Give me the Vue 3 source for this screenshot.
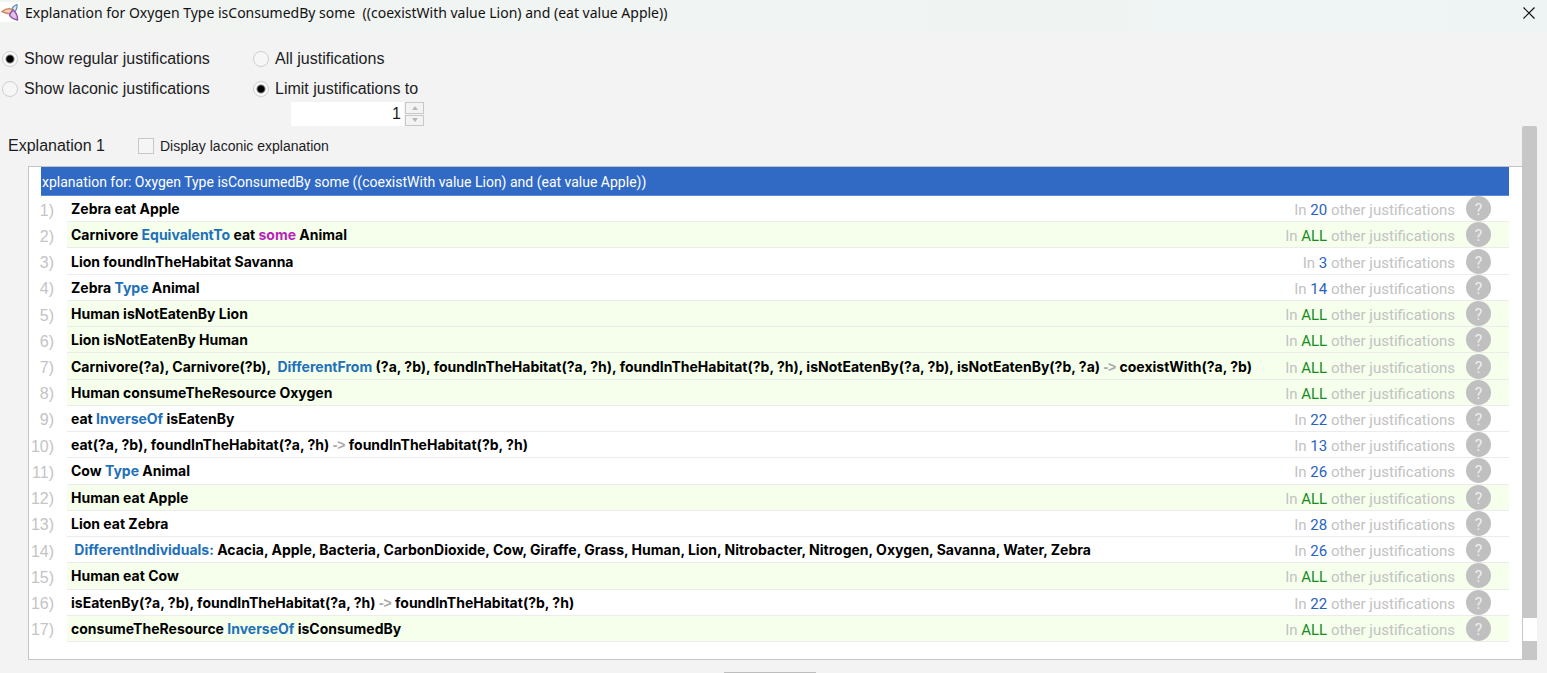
<script setup>
import { ref } from 'vue'

const mode = ref('regular')
const scope = ref('limit')
const limit = ref(1)
const laconic = ref(false)

// Token kinds: k = keyword, s = restriction, a = arrow
const axioms = [
  { count: '20', parts: [['Zebra eat Apple']] },
  { count: 'ALL', parts: [['Carnivore '], ['EquivalentTo', 'k'], [' eat '], ['some', 's'], [' Animal']] },
  { count: '3', parts: [['Lion foundInTheHabitat Savanna']] },
  { count: '14', parts: [['Zebra '], ['Type', 'k'], [' Animal']] },
  { count: 'ALL', parts: [['Human isNotEatenBy Lion']] },
  { count: 'ALL', parts: [['Lion isNotEatenBy Human']] },
  {
    count: 'ALL',
    parts: [
      ['Carnivore(?a), Carnivore(?b),  '],
      ['DifferentFrom', 'k'],
      [' (?a, ?b), foundInTheHabitat(?a, ?h), foundInTheHabitat(?b, ?h), isNotEatenBy(?a, ?b), isNotEatenBy(?b, ?a) '],
      ['->', 'a'],
      [' coexistWith(?a, ?b)'],
    ],
  },
  { count: 'ALL', parts: [['Human consumeTheResource Oxygen']] },
  { count: '22', parts: [['eat '], ['InverseOf', 'k'], [' isEatenBy']] },
  { count: '13', parts: [['eat(?a, ?b), foundInTheHabitat(?a, ?h) '], ['->', 'a'], [' foundInTheHabitat(?b, ?h)']] },
  { count: '26', parts: [['Cow '], ['Type', 'k'], [' Animal']] },
  { count: 'ALL', parts: [['Human eat Apple']] },
  { count: '28', parts: [['Lion eat Zebra']] },
  {
    count: '26',
    parts: [
      [' '],
      ['DifferentIndividuals:', 'k'],
      [' Acacia, Apple, Bacteria, CarbonDioxide, Cow, Giraffe, Grass, Human, Lion, Nitrobacter, Nitrogen, Oxygen, Savanna, Water, Zebra'],
    ],
  },
  { count: 'ALL', parts: [['Human eat Cow']] },
  { count: '22', parts: [['isEatenBy(?a, ?b), foundInTheHabitat(?a, ?h) '], ['->', 'a'], [' foundInTheHabitat(?b, ?h)']] },
  { count: 'ALL', parts: [['consumeTheResource '], ['InverseOf', 'k'], [' isConsumedBy']] },
]
</script>

<template>
  <div class="window">
    <header class="titlebar">
      <svg class="logo" viewBox="0 0 20 22" aria-hidden="true">
        <rect width="20" height="20" y="2" fill="#fff" />
        <path d="M12 9Q13 6 17 4.500Q17.500 9 14.500 12" fill="#dcebf2" stroke="#5a90b4" stroke-width="1.200" />
        <path d="M2 11.500Q7 7.500 13 9.500Q11 14 8 13.500Q5 13 2 11.500Z" fill="#f0d2bd" stroke="#cf8a60" stroke-width="1.500" />
        <path d="M13 10Q18 14 17.500 20Q11 18.500 9.500 15Q11 12 13 10Z" fill="#dfc3ea" stroke="#9350ac" stroke-width="1.500" />
      </svg>
      <h1>Explanation for Oxygen Type isConsumedBy some&nbsp; ((coexistWith value Lion) and (eat value Apple))</h1>
      <button class="close" type="button" aria-label="Close">
        <svg viewBox="0 0 12 12"><path d="M0.500 0.500L11.500 11.500M11.500 0.500L0.500 11.500" stroke="#111" stroke-width="1.200" /></svg>
      </button>
    </header>

    <form class="options" @submit.prevent>
      <div class="group">
        <label><input v-model="mode" type="radio" name="mode" value="regular" />Show regular justifications</label>
        <label><input v-model="mode" type="radio" name="mode" value="laconic" />Show laconic justifications</label>
      </div>
      <div class="group">
        <label><input v-model="scope" type="radio" name="scope" value="all" />All justifications</label>
        <label><input v-model="scope" type="radio" name="scope" value="limit" />Limit justifications to</label>
        <div class="spinner">
          <input v-model="limit" type="text" inputmode="numeric" aria-label="Justification limit" />
          <div class="steps">
            <button type="button" aria-label="Increase" @click="limit++">
              <svg viewBox="0 0 6 4"><path d="M0 4L3 0L6 4Z" fill="#b8b8b8" /></svg>
            </button>
            <button type="button" aria-label="Decrease" @click="limit--">
              <svg viewBox="0 0 6 4"><path d="M0 0L3 4L6 0Z" fill="#b8b8b8" /></svg>
            </button>
          </div>
        </div>
      </div>
    </form>

    <main class="scroller">
      <section class="explanation">
        <div class="heading">
          <h2>Explanation 1</h2>
          <label><input v-model="laconic" type="checkbox" />Display laconic explanation</label>
        </div>
        <div class="panel">
          <h3>xplanation for: Oxygen Type isConsumedBy some ((coexistWith value Lion) and (eat value Apple))</h3>
          <ol>
            <li v-for="(axiom, i) in axioms" :key="i">
              <span class="number">{{ i + 1 }})</span>
              <div class="row" :class="{ shared: axiom.count === 'ALL' }">
                <span class="axiom"><span v-for="(part, j) in axiom.parts" :key="j" :class="part[1]">{{ part[0] }}</span></span>
                <span class="usage">In <b>{{ axiom.count }}</b> other justifications</span>
                <button class="help" type="button" aria-label="Explain axiom">?</button>
              </div>
            </li>
          </ol>
        </div>
      </section>
      <div class="track"><div class="thumb"></div></div>
    </main>

    <footer><button type="button" aria-label="OK"></button></footer>
  </div>
</template>

<style>
body {
  margin: 0;
  background: #f3f3f3;
}
</style>

<style scoped>
* {
  box-sizing: border-box;
}
.window {
  display: flex;
  flex-direction: column;
  min-height: 100vh;
  background: #f3f3f3;
  color: #1c1c24;
  font: 16px/20px "Liberation Sans", Arial, sans-serif;
}
h1,
h2,
h3,
ol {
  margin: 0;
  padding: 0;
  font-weight: normal;
}
h2 {
  font-size: 16px;
}
button {
  margin: 0;
  padding: 0;
  font: inherit;
}
.titlebar {
  display: flex;
  align-items: flex-start;
  height: 32px;
  background: linear-gradient(90deg, #f1f4f1, #eef4f4);
}
.logo {
  width: 20px;
  height: 22px;
}
h1 {
  flex: 1;
  padding: 3px 0 0 5px;
  color: #111;
  font: 14px/20px "Noto Sans", "Open Sans", sans-serif;
}
.close {
  display: flex;
  margin: 7px 12px 0 0;
  border: 0;
  background: none;
}
.close svg {
  width: 12px;
  height: 12px;
}
.options {
  display: flex;
  height: 94px;
  padding-top: 12px;
}
.group {
  display: flex;
  flex-direction: column;
  width: 251px;
  padding-left: 2px;
}
.group label {
  display: flex;
  align-items: center;
  gap: 6px;
  height: 30px;
}
input[type="radio"] {
  width: 16px;
  height: 16px;
  margin: 0;
  border: 1px solid #cfcfcf;
  border-radius: 50%;
  background: #f6f6f6;
  appearance: none;
}
input[type="radio"]:checked {
  background: radial-gradient(circle, #000 0 3px, #fafafa 5px);
}
.spinner {
  display: flex;
  gap: 1px;
  width: 133px;
  height: 24px;
  margin: -2px 0 0 38px;
}
.spinner input {
  flex: 1;
  min-width: 0;
  padding: 0 3px;
  border: 0;
  background: #fff;
  color: inherit;
  font: inherit;
  text-align: right;
}
.steps {
  display: flex;
  flex-direction: column;
  gap: 1px;
  width: 19px;
}
.steps button {
  display: flex;
  flex: 1;
  align-items: center;
  justify-content: center;
  border: 1px solid #c8c8c8;
  background: #f3f3f3;
}
.steps svg {
  flex: none;
  width: 6px;
  height: 4px;
}
.scroller {
  display: flex;
  flex: 1;
  margin-right: 10px;
}
.explanation {
  display: flex;
  flex: 1;
  flex-direction: column;
  min-width: 0;
}
.heading {
  display: flex;
  align-items: center;
  gap: 33px;
  height: 40px;
  padding-left: 8px;
}
.heading label {
  display: flex;
  align-items: center;
  gap: 6px;
  font-size: 14px;
}
input[type="checkbox"] {
  width: 16px;
  height: 16px;
  margin: 0;
  border: 1px solid #c8c8c8;
  background: #f5f5f5;
  appearance: none;
}
.panel {
  display: flex;
  flex: 1;
  flex-direction: column;
  margin-left: 28px;
  padding: 0 13px 17px 0;
  border: solid #c4c4c4;
  border-width: 1px 0 1px 1px;
  background: #fff;
}
h3 {
  height: 29px;
  margin-left: 12px;
  padding-left: 1px;
  border-bottom: 1px solid #5b8bd3;
  background: #316ac5;
  color: #fff;
  font: 14px/30px Roboto, sans-serif;
}
ol {
  display: grid;
  flex: 1;
  grid-auto-rows: 1fr;
  list-style: none;
}
li {
  display: flex;
  min-width: 0;
}
.number {
  display: flex;
  align-items: center;
  justify-content: flex-end;
  width: 25px;
  margin-right: 13px;
  padding-top: 3px;
  color: #c4c4c4;
}
.row {
  display: flex;
  flex: 1;
  align-items: center;
  min-width: 0;
  padding: 0 18px 0 4px;
  border-bottom: 1px solid #ececec;
  background: #fff;
}
.row.shared {
  background: #f5ffec;
}
.axiom {
  flex: 1;
  min-width: 0;
  padding-top: 1px;
  color: #000;
  font: bold 14px/20px Inter, sans-serif;
  white-space: pre;
}
.k {
  color: #2270ba;
}
.s {
  color: #bb1fbb;
}
.a {
  color: #a8a8a8;
  font-family: "Liberation Sans", Arial, sans-serif;
}
.usage {
  padding-top: 3px;
  color: #c2c2c2;
  font-family: Roboto, sans-serif;
  font-size: 15px;
  white-space: nowrap;
}
.usage b {
  color: #2a62c0;
  font-weight: normal;
}
.shared .usage b {
  color: #168c22;
}
.help {
  width: 25px;
  height: 25px;
  margin-left: 11px;
  border: 0;
  border-radius: 50%;
  background: #c0c0c0;
  color: #eee;
  font-family: Roboto, sans-serif;
  line-height: 28px;
}
.track {
  display: flex;
  align-items: flex-end;
  width: 15px;
  padding-bottom: 19px;
  border-radius: 2px 2px 0 0;
  background: #c7c7c7;
}
.thumb {
  width: 14px;
  height: 23px;
  margin-left: 1px;
  background: #fff;
}
footer {
  display: flex;
  justify-content: center;
  height: 13px;
  padding: 12px 7px 0 0;
  overflow: hidden;
}
footer button {
  width: 92px;
  height: 24px;
  border: 1px solid #bdbdbd;
  background: #f3f3f3;
}
</style>
